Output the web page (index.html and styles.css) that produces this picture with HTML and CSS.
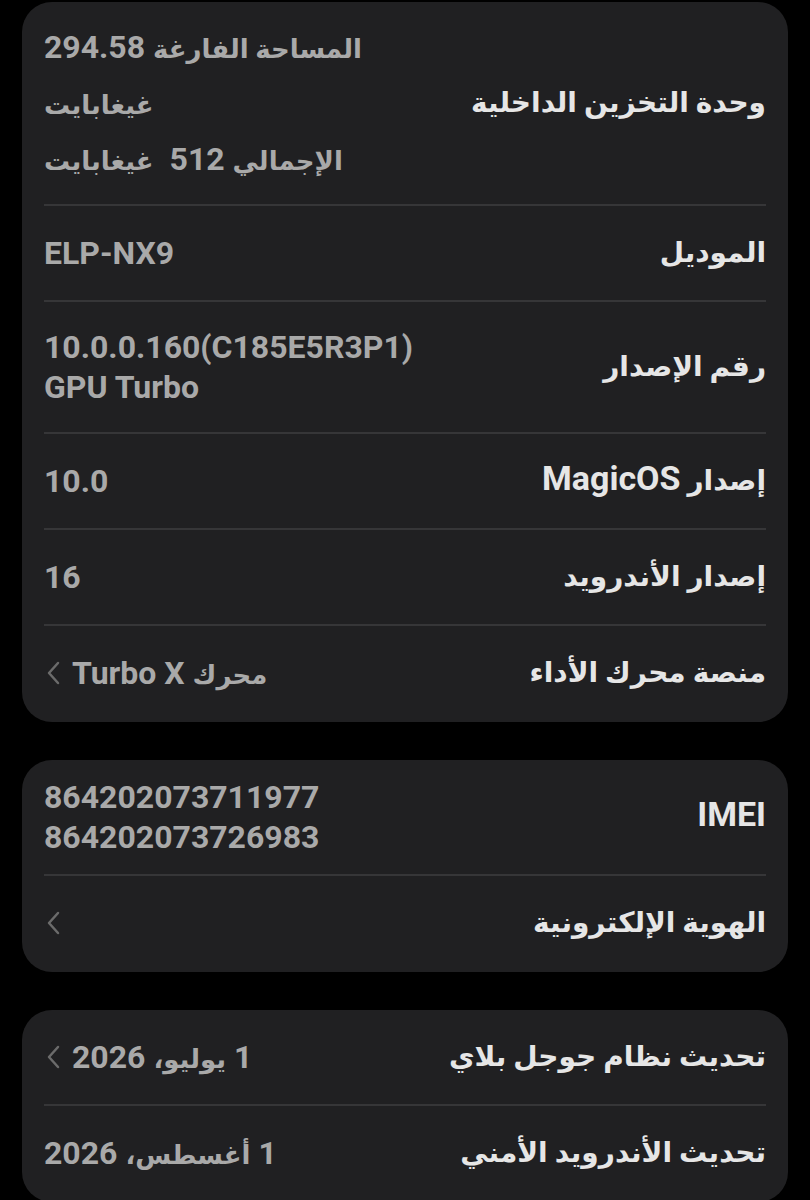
FILE: index.html
```html
<!DOCTYPE html>
<html lang="ar" dir="rtl">

<head>
  <meta charset="UTF-8">
  <meta name="viewport" content="width=device-width, initial-scale=1.0">
  <title>حول الهاتف</title>
  <link rel="stylesheet" href="styles.css">
</head>

<body>
  <div class="card">
    <div class="row row-storage">
      <div class="label">وحدة التخزين الداخلية</div>
      <div class="value value-ar">
        <div><span class="ar">المساحة الفارغة</span> 294.58</div>
        <div><span class="ar">غيغابايت</span></div>
        <div><span class="ar">الإجمالي</span> 512&nbsp; <span class="ar">غيغابايت</span></div>
      </div>
    </div>
    <div class="row">
      <div class="label">الموديل</div>
      <div class="value"><div dir="ltr">ELP-NX9</div></div>
    </div>
    <div class="row row-tall">
      <div class="label">رقم الإصدار</div>
      <div class="value">
        <div dir="ltr">10.0.0.160(C185E5R3P1)</div>
        <div dir="ltr">GPU Turbo</div>
      </div>
    </div>
    <div class="row">
      <div class="label">إصدار <span class="lat">MagicOS</span></div>
      <div class="value"><div dir="ltr">10.0</div></div>
    </div>
    <div class="row">
      <div class="label">إصدار الأندرويد</div>
      <div class="value"><div dir="ltr">16</div></div>
    </div>
    <div class="row">
      <div class="label">منصة محرك الأداء</div>
      <div class="value link">
        <span><span class="ar">محرك</span> Turbo X</span>
        <svg class="chevron" viewBox="0 0 18 26" width="18" height="26"><path d="M14 3 L5 13 L14 23" /></svg>
      </div>
    </div>
  </div>

  <div class="card">
    <div class="row row-imei">
      <div class="label"><span class="lat">IMEI</span></div>
      <div class="value">
        <div dir="ltr">864202073711977</div>
        <div dir="ltr">864202073726983</div>
      </div>
    </div>
    <div class="row">
      <div class="label">الهوية الإلكترونية</div>
      <div class="value link">
        <svg class="chevron" viewBox="0 0 18 26" width="18" height="26"><path d="M14 3 L5 13 L14 23" /></svg>
      </div>
    </div>
  </div>

  <div class="card">
    <div class="row">
      <div class="label">تحديث نظام جوجل بلاي</div>
      <div class="value link">
        <span>1 <span class="ar">يوليو،</span> 2026</span>
        <svg class="chevron" viewBox="0 0 18 26" width="18" height="26"><path d="M14 3 L5 13 L14 23" /></svg>
      </div>
    </div>
    <div class="row">
      <div class="label">تحديث الأندرويد الأمني</div>
      <div class="value"><div>1 <span class="ar">أغسطس،</span> 2026</div></div>
    </div>
  </div>
</body>

</html>
```

FILE: styles.css
```css
body {
  margin: 0;
  padding: 2px 22px 40px;
  background-color: #000;
  font-family: Roboto, "DejaVu Sans", sans-serif;
  font-weight: bold;
}

.card {
  background: #202022;
  border-radius: 30px;
  padding: 0 22px;
  margin-bottom: 38px;
}

.row {
  display: flex;
  align-items: center;
  justify-content: space-between;
  min-height: 48px;
  padding: 23px 0;
  border-bottom: 2px solid #363638;
}

.row:last-child {
  border-bottom: none;
  padding-bottom: 25px;
}

.row-storage {
  padding: 17px 0;
}

.row-tall {
  padding: 25px 0;
}

.row-imei {
  padding: 17px 0;
}

.label {
  color: #e6e6e6;
  font-size: 28px;
  line-height: 48px;
}

.label .lat {
  font-size: 34px;
  line-height: 1;
}

.value {
  color: #a9a9a9;
  font-size: 32px;
  line-height: 40px;
  text-align: left;
}

.value .ar {
  font-size: 26px;
  line-height: 1;
}

.value-ar {
  line-height: 56px;
}

.link {
  display: flex;
  align-items: center;
  gap: 10px;
}

.chevron {
  fill: none;
  stroke: #6b6b6b;
  stroke-width: 2.5;
  stroke-linecap: round;
  stroke-linejoin: round;
}
```
